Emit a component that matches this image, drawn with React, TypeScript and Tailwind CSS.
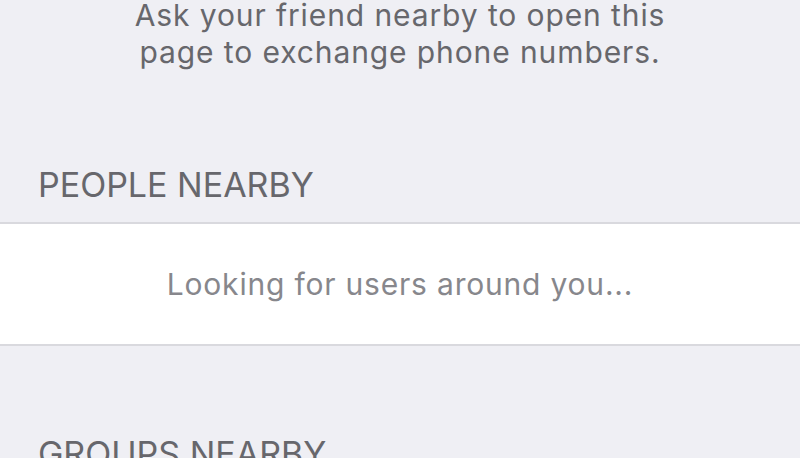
export default function App() {
  return (
    <div
      className="w-[800px] h-[458px] overflow-hidden bg-[#efeff4] flex flex-col"
      style={{ fontFamily: "Inter, 'Liberation Sans', sans-serif" }}
    >
      <div className="mt-[-3px] text-center text-[30px] leading-[37px] tracking-[0.9px] text-[#67676c]">
        <p>Ask your friend nearby to open this</p>
        <p>page to exchange phone numbers.</p>
      </div>
      <div className="mt-[94px] pl-[38px] text-[34px] leading-[40px] text-[#67676c]">PEOPLE NEARBY</div>
      <div className="mt-[17px] h-[124px] shrink-0 bg-white border-y-2 border-[#d9d9de] flex items-center justify-center">
        <span className="text-[30px] leading-[36px] tracking-[0.8px] text-[#87878c]">Looking for users around you...</span>
      </div>
      <div className="mt-[88px] shrink-0 pl-[38px] text-[34px] leading-[40px] text-[#67676c]">GROUPS NEARBY</div>
    </div>
  );
}
